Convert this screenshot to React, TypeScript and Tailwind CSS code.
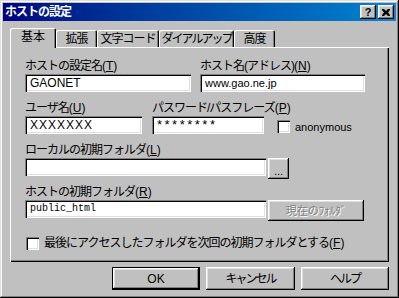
import React from 'react';

// Win9x bevels
const raised = 'shadow-[inset_-1px_-1px_#000,inset_1px_1px_#fff,inset_-2px_-2px_#808080,inset_2px_2px_#dfdfdf]';
const sunken = 'shadow-[inset_1px_1px_#808080,inset_2px_2px_#000,inset_-1px_-1px_#fff,inset_-2px_-2px_#dfdfdf]';

const Key = ({ c }: { c: string }) => (
  <span className="tracking-[0px]">
    (<u>{c}</u>)
  </span>
);

const Field = ({ value, className = '' }: { value: string; className?: string }) => (
  <div className={`h-[18px] bg-white ${sunken} pl-[5px] flex items-center ${className}`}>{value}</div>
);

const Check = ({ checked = false }: { checked?: boolean }) => (
  <div className={`w-[13px] h-[13px] bg-white ${sunken} shrink-0`}>{checked && '✓'}</div>
);

const Button = ({
  label,
  isDefault = false,
  className = '',
}: {
  label: React.ReactNode;
  isDefault?: boolean;
  className?: string;
}) => (
  <div className={`${isDefault ? 'border border-black' : ''} ${className}`}>
    <div className={`w-full h-full ${raised} flex items-center justify-center`}>{label}</div>
  </div>
);

const tabs = ['拡張', '文字コード', 'ダイアルアップ', '高度'];
const tabWidths = ['w-[41px]', 'w-[62px]', 'w-[75px]', 'w-[41px]'];

export default function App() {
  return (
    <div
      className={`w-[399px] h-[298px] bg-[#c0c0c0] p-[3px] flex flex-col text-[12px] tracking-[-1px] text-black whitespace-nowrap font-['Liberation_Sans','Noto_Sans_CJK_JP',sans-serif] shadow-[inset_-1px_-1px_#000,inset_1px_1px_#dfdfdf,inset_-2px_-2px_#808080,inset_2px_2px_#fff]`}
    >
      {/* title bar */}
      <div className="h-[18px] bg-gradient-to-r from-[#000080] to-[#1084d0] flex items-center pl-[2px] pr-[2px]">
        <span className="text-white font-bold flex-1">ホストの設定</span>
        <div className={`w-[16px] h-[14px] bg-[#c0c0c0] ${raised} flex items-center justify-center font-bold text-[11px] leading-none tracking-[0px]`}>
          ?
        </div>
        <div className={`ml-[2px] w-[16px] h-[14px] bg-[#c0c0c0] ${raised} flex items-center justify-center`}>
          <svg width="8" height="7" viewBox="0 0 8 7">
            <path d="M0 0h2l2 2 2-2h2v1L6 3.5 8 6v1H6L4 5 2 7H0V6l2-2.5L0 1z" fill="#000" />
          </svg>
        </div>
      </div>

      <div className="px-[7px] pt-[7px] flex flex-col">
        {/* tabs */}
        <div className="flex items-end h-[19px]">
          <div className="relative z-10 -mb-px w-[46px] h-[20px] bg-[#c0c0c0] rounded-t-[2px] shadow-[inset_1px_1px_#fff,inset_-1px_0_#000,inset_-2px_0_#808080] flex justify-center pt-[2px] leading-[14px] tracking-[0px]">
            基本
          </div>
          {tabs.map((t, i) => (
            <div
              key={t}
              className={`${tabWidths[i]} h-[17px] rounded-t-[2px] shadow-[inset_1px_1px_#fff,inset_-1px_0_#000,inset_-2px_0_#808080] flex justify-center pt-[2px] leading-[14px] ${i === 2 ? 'tracking-[-2px]' : ''}`}
            >
              {t}
            </div>
          ))}
        </div>

        {/* panel */}
        <div className="h-[215px] shadow-[inset_1px_1px_#fff,inset_-1px_-1px_#000,inset_-2px_-2px_#808080] pl-[15px] pt-[11px] flex flex-col leading-[16px]">
          <div className="flex gap-[9px]">
            <div className="w-[166px]">
              <div>
                ホストの設定名<Key c="T" />
              </div>
              <Field value="GAONET" className="tracking-[0px]" />
            </div>
            <div className="w-[165px]">
              <div>
                ホスト名(アドレス)<Key c="N" />
              </div>
              <Field value="www.gao.ne.jp" className="text-[11px] pl-[3px] tracking-[0px]" />
            </div>
          </div>

          <div className="flex mt-[8px]">
            <div className="w-[117px]">
              <div>
                ユーザ名<Key c="U" />
              </div>
              <Field value="XXXXXXX" className="tracking-[1px] pl-[4px]" />
            </div>
            <div className="w-[112px] ml-[10px]">
              <div>
                パスワード/パスフレーズ<Key c="P" />
              </div>
              <Field value="********" className="tracking-[2.5px] pl-[3px] text-[13px]" />
            </div>
            <div className="ml-[13px] mt-[20px] flex items-center gap-[5px] h-[13px]">
              <Check />
              <span className="text-[11px] tracking-[0px]">anonymous</span>
            </div>
          </div>

          <div className="mt-[8px]">
            ローカルの初期フォルダ<Key c="L" />
          </div>
          <div className="flex gap-[2px] items-start">
            <Field value="" className="w-[241px]" />
            <Button label={<span className="tracking-[0px] text-[11px] pt-[4px]">...</span>} className="w-[21px] h-[21px]" />
          </div>

          <div className="mt-[5px]">
            ホストの初期フォルダ<Key c="R" />
          </div>
          <div className="flex gap-[2px] items-start">
            <Field value="public_html" className="w-[241px] font-['Liberation_Mono',monospace] text-[10px] tracking-[0px]" />
            <Button
              label={<span className="text-[#808080] [text-shadow:1px_1px_0_#fff] tracking-[0px] text-[11px]">現在のﾌｫﾙﾀﾞ</span>}
              className="w-[96px] h-[21px]"
            />
          </div>

          <div className="mt-[14px] flex items-center gap-[5px] pl-[1px]">
            <Check />
            <span>
              最後にアクセスしたフォルダを次回の初期フォルダとする<Key c="F" />
            </span>
          </div>
        </div>

        {/* dialog buttons */}
        <div className="flex justify-end gap-[6px] mt-[5px] tracking-[-2px]">
          <Button label={<span className="tracking-[0px]">OK</span>} isDefault className="w-[88px] h-[23px]" />
          <Button label="キャンセル" className="w-[89px] h-[23px]" />
          <Button label="ヘルプ" className="w-[88px] h-[23px]" />
        </div>
      </div>
    </div>
  );
}
